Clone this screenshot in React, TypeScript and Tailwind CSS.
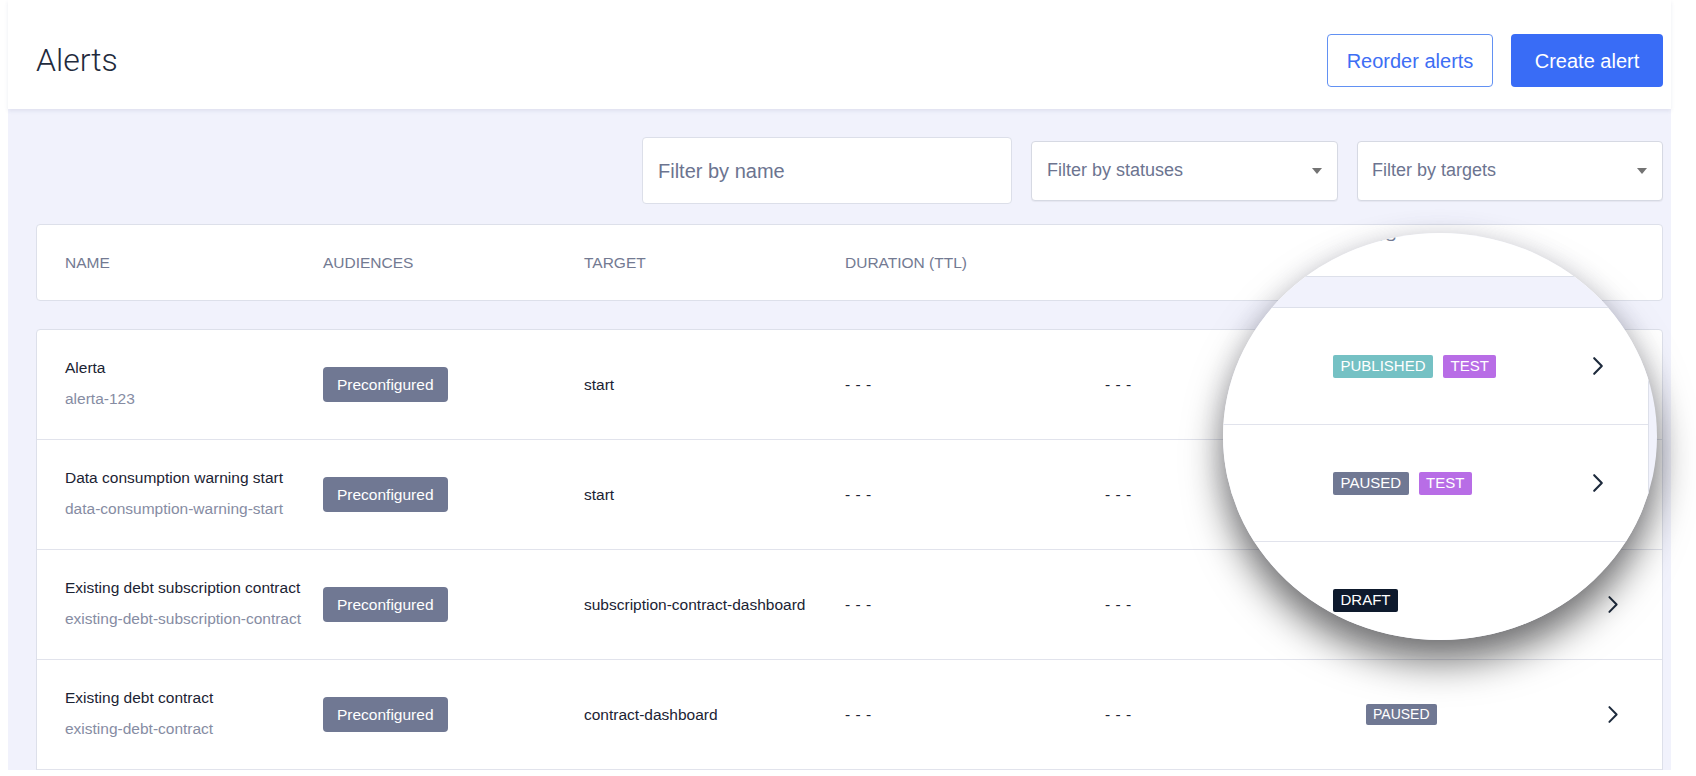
import React from "react";

function Chevron({ className = "" }: { className?: string }) {
  return (
    <svg viewBox="0 0 12 20" className={className} fill="none">
      <path d="M2.2 2.2l7.6 7.8-7.6 7.8" stroke="#1d2a3c" strokeWidth="2.1" strokeLinecap="round" strokeLinejoin="round" />
    </svg>
  );
}

function Caret() {
  return (
    <svg viewBox="0 0 10 6" className="w-[10px] h-[6px]">
      <path d="M0 0h10L5 6z" fill="#737373" />
    </svg>
  );
}

type Badge = { label: string; cls: string };
const PUB: Badge = { label: "PUBLISHED", cls: "bg-[#75c1c4]" };
const TEST: Badge = { label: "TEST", cls: "bg-[#b86de6]" };
const PAUSED: Badge = { label: "PAUSED", cls: "bg-[#707893]" };
const DRAFT: Badge = { label: "DRAFT", cls: "bg-[#0e1a2d]" };

const rows = [
  { name: "Alerta", slug: "alerta-123", target: "start", badges: [PUB, TEST], underLens: true },
  { name: "Data consumption warning start", slug: "data-consumption-warning-start", target: "start", badges: [PAUSED, TEST], underLens: true },
  { name: "Existing debt subscription contract", slug: "existing-debt-subscription-contract", target: "subscription-contract-dashboard", badges: [DRAFT], underLens: true },
  { name: "Existing debt contract", slug: "existing-debt-contract", target: "contract-dashboard", badges: [PAUSED], underLens: false },
];

const grid = "grid grid-cols-[258px_261px_261px_260px_261px_1fr_auto] items-center pl-7 pr-[43px]";

function BadgeList({ badges, big }: { badges: Badge[]; big?: boolean }) {
  return (
    <div className={big ? "flex gap-[10px]" : "flex gap-[9px]"}>
      {badges.map((b) => (
        <span
          key={b.label}
          className={
            big
              ? `inline-flex items-center h-[23px] px-[7.5px] rounded-[2px] text-[15px] text-white ${b.cls}`
              : `inline-flex items-center h-[21px] px-[7px] rounded-[2px] text-[14px] text-white ${b.cls}`
          }
        >
          {b.label}
        </span>
      ))}
    </div>
  );
}

export default function App() {
  return (
    <div className="relative w-[1696px] h-[776px] overflow-hidden bg-white font-['Liberation_Sans',Arial,sans-serif]">
      <div className="ml-2 w-[1663px] h-[770px] flex flex-col">
        <header className="relative z-10 h-[109px] shrink-0 flex items-center justify-between pl-7 pr-2 pt-3 bg-white shadow-[0_2px_4px_rgba(40,50,110,0.09)]">
          <h1 className="font-['Roboto',sans-serif] font-light text-[32px] leading-none text-[#1f2b3d] -mt-[2px]">Alerts</h1>
          <div className="flex items-center gap-[18px]">
            <button className="h-[53px] w-[166px] rounded-[4px] border border-[#6291f3] bg-white text-[#3d6ef4] text-[20px]">
              Reorder alerts
            </button>
            <button className="h-[53px] w-[152px] rounded-[4px] bg-[#396cf6] text-white text-[20px]">
              Create alert
            </button>
          </div>
        </header>

        <main className="flex-1 bg-[#f1f2fc] pl-7 pr-2 overflow-hidden">
          <div className="pt-[28px] flex justify-end items-center gap-[19px]">
            <div className="w-[370px] h-[67px] bg-white border border-[#dcdfe9] rounded-[4px] flex items-center px-[15px] text-[20px] text-[#6c7490]">
              Filter by name
            </div>
            <div className="w-[307px] h-[60px] bg-white border border-[#d6d9e3] rounded-[4px] flex items-center justify-between pl-[15px] pr-[15px] text-[18px] text-[#6c7490] shadow-[0_1px_1px_rgba(0,0,0,0.05)]">
              <span>Filter by statuses</span>
              <Caret />
            </div>
            <div className="w-[306px] h-[60px] bg-white border border-[#d6d9e3] rounded-[4px] flex items-center justify-between pl-[14px] pr-[15px] text-[18px] text-[#6c7490] shadow-[0_1px_1px_rgba(0,0,0,0.05)]">
              <span>Filter by targets</span>
              <Caret />
            </div>
          </div>

          <div className={`mt-[20px] h-[77px] bg-white border border-[#dde0ea] rounded-[4px] text-[15.5px] text-[#737a92] ${grid}`}>
            <span>NAME</span>
            <span>AUDIENCES</span>
            <span>TARGET</span>
            <span>DURATION (TTL)</span>
            <span></span>
            <span></span>
            <span className="w-[12px]"></span>
          </div>

          <div className="mt-[28px] bg-white border border-[#dde0ea] rounded-t-[4px]">
            {rows.map((r) => (
              <div key={r.slug} className={`h-[110px] border-b border-[#e1e3ec] text-[15.5px] ${grid}`}>
                <div className="flex flex-col gap-[11px] -mt-[2px]">
                  <span className="leading-5 text-[#1b2333] whitespace-nowrap">{r.name}</span>
                  <span className="leading-5 text-[#868ca3] whitespace-nowrap">{r.slug}</span>
                </div>
                <div>
                  <span className="inline-flex items-center h-[35px] px-[14px] rounded-[4px] bg-[#707893] text-white">Preconfigured</span>
                </div>
                <span className="text-[#1b2333]">{r.target}</span>
                <span className="text-[#1b2333] tracking-[0.5px]">- - -</span>
                <span className="text-[#1b2333] tracking-[0.5px]">- - -</span>
                <div>{r.underLens ? null : <BadgeList badges={r.badges} />}</div>
                <Chevron className="w-[12px] h-[19px]" />
              </div>
            ))}
          </div>
        </main>
      </div>

      {/* magnifier lens */}
      <div className="absolute left-[1223px] top-[233px] w-[434px] h-[407px] rounded-[50%] overflow-hidden bg-[#f1f2fc] shadow-[0_22px_38px_rgba(0,0,0,0.55),0_0_24px_rgba(90,90,140,0.12)]">
        <div className="w-[426px] bg-white border-r border-[#dde0ea] h-full">
          <div className="relative h-[44px] border-b border-[#dde0ea]">
            <span className="absolute left-[110px] -top-[9px] text-[16.6px] text-[#737a92]">STATUS</span>
          </div>
          <div className="h-[31px] bg-[#f1f2fc] border-b border-[#dde0ea] -mr-[1px]"></div>
          {rows.slice(0, 3).map((r) => (
            <div key={r.slug} className="h-[117px] border-b border-[#e1e3ec] flex items-center justify-between pl-[110px] pr-[44px]">
              <BadgeList badges={r.badges} big />
              <Chevron className="w-[12px] h-[20px]" />
            </div>
          ))}
        </div>
      </div>
    </div>
  );
}
